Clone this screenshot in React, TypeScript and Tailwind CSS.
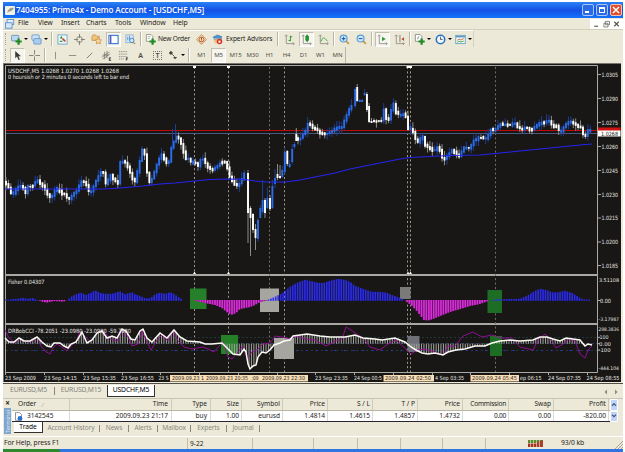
import React from "react";
import clsx from "clsx";

type Point = [number, number];

// key points of the price curve
const price: Point[] = [
  [5, 182], [8, 187], [12, 195], [16, 189], [20, 185], [24, 189], [26, 195], [28, 186], [32, 187], [35, 182],
  [37, 180], [40, 184], [44, 187], [47, 194], [51, 198], [55, 190], [58, 188], [61, 194], [65, 194], [68, 200],
  [72, 195], [76, 192], [80, 184], [83, 180], [87, 187], [90, 194], [93, 187], [96, 180], [100, 173], [103, 172],
  [106, 185], [110, 175], [114, 180], [118, 183], [120, 163], [124, 161], [128, 168], [132, 178], [135, 182],
  [138, 168], [142, 150], [145, 155], [147, 173], [150, 184], [154, 172], [158, 160], [162, 154], [165, 161],
  [168, 166], [171, 148], [174, 141], [176, 137], [179, 139], [182, 147], [185, 158], [188, 159], [192, 163],
  [195, 162], [198, 166], [201, 158], [204, 160], [207, 167], [213, 170], [217, 166], [221, 162], [226, 163],
  [229, 176], [232, 181], [236, 186], [240, 183], [243, 176], [246, 171],
];

const rally: Point[] = [
  [297, 138], [299, 141], [302, 135], [305, 133], [307, 123], [309, 124], [313, 128], [317, 130], [320, 133],
  [325, 134], [329, 133], [333, 130], [338, 127], [342, 127], [345, 118], [348, 112], [350, 107], [353, 106],
];

const tail: Point[] = [
  [373, 121], [377, 121], [381, 121], [383, 118], [384, 107], [386, 118], [389, 120], [391, 110], [393, 102],
  [396, 113], [400, 115], [403, 114], [406, 118], [408, 128], [411, 129], [414, 134], [416, 142], [419, 142],
  [422, 134], [424, 144], [428, 147], [432, 150], [436, 150], [438, 146], [441, 154], [443, 161], [446, 157],
  [449, 153], [452, 150], [456, 154], [459, 156], [462, 150], [465, 147], [468, 149], [471, 145], [474, 140],
  [477, 139], [480, 137], [484, 139], [487, 138], [490, 129], [492, 131], [496, 128], [500, 124], [505, 125],
  [510, 125], [514, 123], [518, 128], [522, 129], [526, 127], [530, 130], [534, 128], [538, 124], [543, 123],
  [548, 120], [551, 124], [553, 127], [556, 125], [559, 131], [562, 131], [565, 124], [569, 122], [573, 123],
  [577, 126], [581, 128], [584, 138], [587, 132], [589, 127], [591, 133],
];

// x, high, low, top, bottom, bullish
const crash: [number, number, number, number, number, number][] = [
  [248, 170, 243, 173, 213, 0],
  [250.5, 206, 256, 208, 218, 0],
  [253, 213, 233, 214, 230, 0],
  [255.5, 224, 250, 229, 238, 0],
  [258, 218, 242, 220, 239, 1],
  [260.3, 205, 218, 208, 218, 1],
  [262.6, 180, 214, 200, 212, 1],
  [265, 198, 218, 200, 213, 0],
  [267.4, 187, 209, 198, 208, 1],
  [270, 195, 211, 198, 209, 0],
  [272.4, 180, 209, 186, 208, 1],
  [275, 169, 188, 178, 184, 1],
  [277.5, 164, 180, 174, 178, 0],
  [280, 165, 179, 176, 178, 0],
  [282.3, 166, 178, 170, 177, 1],
  [284.8, 147, 174, 152, 172, 1],
  [287.3, 150, 166, 151, 164, 0],
  [289.7, 160, 168, 164, 167, 1],
  [292.2, 144, 164, 149, 162, 1],
  [294.4, 142, 149, 144, 147, 1],
  [296.3, 128, 141, 134, 141, 0],
  [355.2, 87, 108, 89, 106, 1],
  [357.2, 84, 102, 87, 101, 0],
  [359.8, 99, 102, 100, 102, 1],
  [362.2, 99, 102, 100, 102, 1],
  [364.6, 89, 96, 93, 95, 1],
  [366.9, 92, 112, 94, 110, 0],
  [369.1, 103, 123, 106, 122, 0],
  [371.5, 118, 123, 121, 123, 0],
];

const ma =
  "5,189 90,189 105,189 120,188 143,186 160,184 175,183 195,181 210,179.5 228,179 245,179.5 255,181 265,182 285,182 300,180 315,177 335,173 350,169 365,166 385,162 400,159 410,157.5 430,156.5 450,155.5 480,155 495,153.5 515,151.5 540,149 560,147 580,145 592,144";

const fisher: Point[] = [
  [5, 1.5], [9, 1], [14, 2], [18, 2], [22, 3], [28, 2], [32, 3], [37, 1], [39, 0.2], [41, -1.5], [47, -2.5],
  [54, -1], [62, -1.5], [66, -1], [68, 1], [71, 4], [77, 7], [81, 8], [86, 6], [90, 7.5], [95, 10.5], [100, 8],
  [104, 7], [108, 7], [112, 7], [120, 9.5], [125, 6.5], [132, 8.5], [136, 6], [140, 5], [144, 3], [148, 2],
  [152, 4], [156, 7], [160, 8], [165, 7], [170, 8.5], [174, 7], [178, 4], [182, 1.5], [184, 0], [193, 0],
  [196, -1], [205, -3], [215, -5], [222, -8], [228, -13], [231, -15], [236, -13], [240, -9], [245, -8],
  [250, -7], [255, -5], [260, -2], [266, -0.6], [268, 1], [275, 4], [283, 8], [290, 14], [297, 18], [305, 21],
  [310, 20], [318, 18], [324, 18], [330, 20], [338, 22], [345, 21], [350, 19], [355, 15], [360, 13],
  [366, 11], [372, 9], [380, 9], [387, 8], [394, 5], [400, 3], [404, 1], [407, -2], [411, -5], [416, -10],
  [420, -15], [424, -20], [428, -20.5], [433, -19], [440, -16], [450, -12], [460, -9], [470, -6], [480, -4],
  [488, -1], [492, 0.7], [497, 1.5], [520, 2], [527, 5], [535, 10], [540, 12], [546, 11], [552, 8.5],
  [558, 8.5], [565, 10], [572, 8], [578, 4], [583, 1.5], [590, 1],
];

const cci: Point[] = [
  [5, 338], [9, 342], [14, 342], [19, 338], [24, 341], [30, 341], [37, 337], [42, 342], [47, 346], [51, 347],
  [54, 343], [60, 343], [64, 346], [68, 348], [71, 344], [76, 342], [82, 332], [87, 343], [92, 340], [97, 333],
  [102, 331], [107, 338], [112, 336], [117, 338], [122, 329], [126, 331], [131, 339], [135, 340], [140, 331],
  [143, 329], [147, 338], [152, 342], [160, 333], [167, 338], [174, 330], [180, 337], [187, 341], [200, 342],
  [205, 344], [212, 344], [222, 343], [228, 349], [233, 354], [240, 355], [244, 349], [246, 352], [248, 364],
  [250, 369], [253, 366], [256, 365], [258, 357], [262, 352], [266, 353], [270, 350], [274, 345], [280, 343],
  [284, 341], [290, 340], [293, 336], [300, 335], [307, 334], [320, 336], [330, 337], [345, 337], [355, 335],
  [363, 338], [375, 339], [382, 340], [395, 338], [405, 342], [411, 347], [416, 350], [422, 353], [428, 354],
  [435, 353], [443, 355], [448, 352], [456, 350], [465, 349], [475, 346], [485, 346], [492, 343], [500, 341],
  [510, 340], [520, 341], [533, 340], [540, 337], [547, 337], [553, 339], [560, 341], [566, 338], [573, 339],
  [580, 340], [585, 346], [588, 344], [592, 345],
];

const turbo =
  "5,330 9,338 15,343 20,338 26,342 33,341 37,337 41,346 45,351 50,354 53,348 57,344 63,348 67,351 72,345 77,340 80,331 85,336 90,342 98,332 103,330 110,339 117,341 122,331 127,335 132,346 138,344 142,331 146,340 151,350 157,340 162,335 168,341 173,330 178,341 184,347 192,349 203,347 208,349 214,352 219,346 223,342 228,357 232,359 238,352 243,346 247,359 252,352 257,350 263,344 270,343 275,336 282,337 290,339 297,336 305,339 315,340 326,346 336,341 342,339 346,327 351,330 358,335 364,339 370,347 380,350 388,344 396,340 406,349 411,354 417,350 424,349 435,352 443,355 448,346 455,346 463,336 473,332 482,337 492,335 500,338 512,338 520,347 533,350 538,340 545,334 552,341 556,348 563,344 569,339 575,341 580,354 585,358 588,350 592,346";

const at = (pts: Point[], x: number) => {
  if (x <= pts[0][0]) return pts[0][1];
  for (let i = 1; i < pts.length; i++) {
    if (x <= pts[i][0]) {
      const [x0, y0] = pts[i - 1];
      const [x1, y1] = pts[i];
      return y0 + ((y1 - y0) * (x - x0)) / (x1 - x0);
    }
  }
  return pts[pts.length - 1][1];
};

const STEP = 2.43;

const steps = (from: number, to: number) => {
  const out: number[] = [];
  for (let x = from; x <= to; x += STEP) out.push(x);
  return out;
};

const noise = (x: number) => {
  const v = Math.sin(x * 12.9898) * 43758.5453;
  return v - Math.floor(v);
};

const Candle = ({ x, high, low, top, bottom, up }: { x: number; high: number; low: number; top: number; bottom: number; up: boolean }) => (
  <g>
    <rect x={x - 0.5} y={high} width={1} height={low - high} fill={up ? "#1c3f96" : "#8d8c88"} />
    <rect x={x - 0.95} y={top} width={1.9} height={bottom - top} fill={up ? "#2b6ce8" : "#ffffff"} />
  </g>
);

const Candles = ({ pts }: { pts: Point[] }) => (
  <>
    {steps(pts[0][0] + 1, pts[pts.length - 1][0] + 0.5).map((x) => {
      const open = at(pts, x - STEP);
      const close = at(pts, x);
      const n = noise(x);
      const up = Math.abs(close - open) < 1 ? n > 0.5 : close < open;
      const top = Math.min(open, close) - 0.4 - noise(x + 3) * 1.4;
      const bottom = Math.max(open, close) + 0.6 + noise(x + 5) * 1.4;
      return <Candle key={x} x={x} top={top} bottom={bottom} high={top - n * 6} low={bottom + noise(x + 7) * 5} up={up} />;
    })}
  </>
);

const Label = ({ x, y, w, children, fill = "#e8e7e2", size = 5.8 }: { x: number; y: number; w: number; children: string; fill?: string; size?: number }) => (
  <text x={x} y={y} textLength={w} lengthAdjust="spacingAndGlyphs" fontSize={size} fill={fill}>
    {children}
  </text>
);

const scale: [string, number][] = [
  ["1.0305", 74.5], ["1.0290", 98.5], ["1.0275", 122.5], ["1.0260", 146.5], ["1.0245", 170.5],
  ["1.0230", 194.5], ["1.0215", 218], ["1.0200", 242], ["1.0185", 265.5],
];

const times: [string, number, number][] = [
  ["23 Sep 2009", 5, 31], ["23 Sep 14:15", 44, 33], ["23 Sep 15:35", 83, 33], ["23 Sep 16:55", 121, 33],
  ["23 S", 158.5, 10], ["23 Sep 23:35", 315, 33], ["24 Sep 00:5", 354, 28], ["4 Sep 03:35", 435, 29],
  ["ep 06:15", 520, 21.5], ["24 Sep 07:35", 548, 33], ["24 Sep 08:55", 586.5, 33],
];

const Chart = () => (
  <svg viewBox="3 63 619 320" className="block h-[320px] w-[619px] shrink-0" fontFamily="'DejaVu Sans Condensed', 'DejaVu Sans', sans-serif">
    <rect x="3" y="63" width="619" height="320" fill="#181715" />
    <path d="M3 63.5H621M3.5 63V382" stroke="#77756d" fill="none" />
    <path d="M3 382.5H622M621.5 63V383" stroke="#efecdc" fill="none" />
    <path d="M5.5 372V65.5H597.5V372.5H5" stroke="#aaa9a4" fill="none" />
    <path d="M5 275H598M5 324H598" stroke="#a9a8a4" strokeWidth="2" />

    {[194.5, 228.5, 269.5, 284.5, 407.5, 410.5, 495.5].map((x) => (
      <path key={x} d={`M${x} 67V372`} stroke={x === 269.5 || x === 495.5 ? "#7d6c60" : "#a09b8f"} strokeDasharray="2 2.4" />
    ))}
    {[194.5, 228.5, 408, 410.5].map((x) => (
      <path key={x} d={`M${x - 1.5} 66h3v2h-3zM${x} 271.5l1.5 2.5h-3z`} fill="#fff" />
    ))}

    <path d="M6 133.5H597" stroke="#4b5a80" />
    <path d="M6 130.5H597" stroke="#c00808" />
    <Candles pts={price} />
    <Candles pts={rally} />
    <Candles pts={tail} />
    {crash.map(([x, high, low, top, bottom, up]) => (
      <Candle key={x} x={x} high={high} low={low} top={top} bottom={bottom} up={up === 1} />
    ))}
    <path d="M175.5 124V140M172.5 129V150" stroke="#1c3f96" />
    <polyline points={ma} fill="none" stroke="#2424ee" strokeWidth="1.1" />

    <Label x={8} y={72.6} w={111}>USDCHF,M5  1.0268 1.0270 1.0268 1.0268</Label>
    <Label x={8} y={79.4} w={121}>0 hoursish or 2 minutes 0 seconds left to bar end</Label>

    {/* Fisher */}
    <rect x="190" y="288.5" width="16.5" height="20.5" fill="#26802a" />
    <rect x="260" y="288.5" width="19" height="23.5" fill="#a6a5a0" />
    <rect x="400" y="287" width="10.5" height="12" fill="#7a7a78" />
    <rect x="487.5" y="290" width="14.5" height="23" fill="#1d6e24" />
    {steps(6, 590).map((x) => {
      const v = at(fisher, x);
      if (Math.abs(v) < 0.5) return null;
      return v > 0 ? (
        <rect key={x} x={x - 0.8} y={300.8 - v} width={1.6} height={v} fill="#2a2af4" />
      ) : (
        <g key={x}>
          <rect x={x - STEP / 2} y={300} width={STEP} height={-v} fill="#6f1470" />
          <rect x={x - 0.8} y={300} width={1.6} height={-v} fill="#d62fd6" />
        </g>
      );
    })}
    <Label x={8} y={284} w={36.5}>Fisher 0.04307</Label>

    {/* CCI */}
    <path d="M6 337.5H597" stroke="#1d3a38" strokeDasharray="2 2" />
    <path d="M6 343.5H597" stroke="#2f4565" strokeDasharray="3 2" strokeWidth="0.8" />
    <path d="M6 350.5H597" stroke="#1e3a48" strokeDasharray="2 3" />
    <path d="M15 350.5H597" stroke="#2b3ee8" strokeDasharray="1.4 8" />
    <rect x="221" y="335" width="17" height="19" fill="#26802a" />
    <rect x="274" y="338" width="20" height="21" fill="#a6a5a0" />
    <rect x="407.5" y="336" width="12" height="16" fill="#6f7077" />
    <rect x="490" y="336" width="12" height="20" fill="#1d6e24" />
    {steps(6, 592).map((x) => (
      <path key={x} d={`M${x} 343.7V${at(cci, x)}`} stroke="#a3a39e" />
    ))}
    <polyline points={turbo} fill="none" stroke="#9a0f9c" strokeWidth="0.9" />
    <polyline points={cci.map((p) => p.join(",")).join(" ")} fill="none" stroke="#fbfaf2" strokeWidth="1.5" />
    <Label x={8} y={333} w={123}>DRBobCCI -78.2051 -23.0980 -23.0980 -59.7980</Label>

    {/* price axis */}
    {scale.map(([t, y]) => (
      <g key={t}>
        <path d={`M598 ${y}h3`} stroke="#aaa9a4" />
        <Label x={601.5} y={y + 2.3} w={16.5}>{t}</Label>
      </g>
    ))}
    <rect x="598" y="127.5" width="22.5" height="4" fill="#d01212" />
    <rect x="598" y="130.5" width="22.5" height="6" fill="#fff" />
    <Label x={601} y={135.8} w={17} fill="#181715">1.0268</Label>
    <Label x={599} y={282} w={20} size={5.2}>3.51108</Label>
    <Label x={600} y={302.8} w={11}>0.00</Label>
    <Label x={598.5} y={321.3} w={20.5} size={4.9}>-3.17987</Label>
    <Label x={598.5} y={331} w={20.5} size={4.9}>298.3836</Label>
    <Label x={599.5} y={339} w={9} size={5.2}>100</Label>
    <Label x={599} y={345.5} w={12} size={5.2}>0.00</Label>
    <Label x={598.5} y={352.4} w={12} size={5.2}>-100</Label>
    <Label x={598.5} y={370} w={20.5} size={4.9}>-444.104</Label>
    <path d="M598 300.5h3M598 337.3h2M598 343.6h2M598 350h2" stroke="#aaa9a4" />

    {/* time axis */}
    <path d="M5.5 372v3M44.5 372v3M83.5 372v3M122.5 372v3M160.5 372v3M199.5 372v3M238.5 372v3M277.5 372v3M315.5 372v3M354.5 372v3M393.5 372v3M432.5 372v3M470.5 372v3M509.5 372v3M548.5 372v3M587.5 372v3" stroke="#aaa9a4" />
    {times.map(([t, x, w]) => (
      <Label key={t} x={x} y={380.2} w={w} size={5.6}>{t}</Label>
    ))}
    <path d="M170 375h138v6.5H170zM383.5 375h50.5v6.5h-50.5zM470.5 375h48.5v6.5h-48.5z" fill="#f8dfb8" />
    <Label x={172} y={380.2} w={32} size={5.4} fill="#1f1b17">2009.09.23 1</Label>
    <Label x={206} y={380.2} w={42} size={5.4} fill="#1f1b17">2009.09.23 20:35</Label>
    <Label x={251.5} y={380.2} w={7} size={5.4} fill="#1f1b17">:09</Label>
    <Label x={262} y={380.2} w={43} size={5.4} fill="#1f1b17">2009.09.23 22:30</Label>
    <Label x={385} y={380.2} w={46} size={5.4} fill="#1f1b17">2009.09.24 02:50</Label>
    <Label x={472} y={380.2} w={45} size={5.4} fill="#1f1b17">2009.09.24 05:45</Label>
  </svg>
);

const Tool = ({ children, wide, active, drop }: { children: React.ReactNode; wide?: string; active?: boolean; drop?: boolean }) => (
  <div className={clsx("flex h-[15px] shrink-0 items-center justify-center gap-px", wide ?? "w-[17px]")}>
    <div className={clsx("flex h-[15px] items-center justify-center", active ? "w-[15px] border border-[#c3bfae] border-r-white border-b-white bg-[#f6f5ee]" : "min-w-[13px]")}>
      {children}
    </div>
    {drop && <div className="h-0 w-0 border-x-2 border-t-2 border-x-transparent border-t-black" />}
  </div>
);

const Sep = ({ wide = "w-1" }: { wide?: string }) => (
  <div className={clsx("flex h-[14px] shrink-0 justify-center", wide)}>
    <div className="w-px bg-[#b9b5a3]" />
    <div className="w-px bg-white" />
  </div>
);

const Icon = ({ children, className = "h-[11px] w-[11px]" }: { children: React.ReactNode; className?: string }) => (
  <svg viewBox="0 0 12 12" className={clsx("shrink-0", className)} fill="none">
    {children}
  </svg>
);

const Plus = () => <path d="M8.3 4.8v6.8M4.9 8.2h6.8" stroke="#1d8a22" strokeWidth="2.4" />;

const Axes = () => <path d="M2.5 1v9.5H11M1 2.5L2.5 1 4 2.5M9.7 9l1.5 1.5L9.7 12" stroke="#8b8a82" strokeWidth="0.9" />;

const Lens = ({ plus }: { plus?: boolean }) => (
  <Icon>
    <path d="M7.5 7.5l3.3 3.3" stroke="#c99a3c" strokeWidth="2" />
    <circle cx="5" cy="5" r="3.8" fill="#cfe6fb" stroke="#5b9bd3" strokeWidth="1.2" />
    <path d={plus ? "M3 5h4M5 3v4" : "M3 5h4"} stroke="#2265a8" strokeWidth="1.2" />
  </Icon>
);

const MainTools = () => (
  <div className="flex h-[17px] w-[471px] items-center border-t border-r border-[#d6d2c0] border-t-white pl-0.5">
    <div className="mr-[3px] h-3 w-0.5 border-l border-dotted border-[#a5a190]" />
    <Tool wide="w-[19px]" drop>
      <Icon>
        <rect x="0.5" y="1.5" width="8" height="6" rx="1" fill="#b9d8f3" stroke="#6c93b0" />
        <Plus />
      </Icon>
    </Tool>
    <Tool wide="w-[21px]" drop>
      <Icon>
        <rect x="1" y="1" width="8" height="6" rx="1" fill="#cfe3f6" stroke="#6b9bc8" />
        <rect x="3" y="5" width="8" height="6" rx="1" fill="#a9cdf0" stroke="#6b9bc8" />
      </Icon>
    </Tool>
    <Sep wide="w-[5px]" />
    <Tool>
      <Icon>
        <rect x="1" y="1" width="10" height="10" fill="#eef7fb" stroke="#6fa9cd" />
        <path d="M3 5l2-3 1 3z" fill="#1d8a22" />
        <path d="M6 5l3 3" stroke="#c34b30" strokeWidth="2" />
        <path d="M3 8h3" stroke="#2a9a32" strokeWidth="1.3" />
      </Icon>
    </Tool>
    <Tool>
      <Icon>
        <circle cx="6" cy="6" r="3.2" stroke="#7e7d76" />
        <path d="M6 0v4.5M6 7.5V12M0 6h4.5M7.5 6H12" stroke="#7e7d76" />
      </Icon>
    </Tool>
    <Tool>
      <Icon>
        <path d="M1 3l1-2h3l1 1.5h3V7H1z" fill="#f0c478" stroke="#c98f48" strokeWidth="0.8" />
        <path d="M8 4l1.2 2.2 2.3.4-1.7 1.7.4 2.5L8 9.6l-2.2 1.2.4-2.5-1.7-1.7 2.3-.4z" fill="#f8d99a" stroke="#c98448" strokeWidth="0.8" />
      </Icon>
    </Tool>
    <Tool active>
      <Icon>
        <rect x="1" y="1.5" width="10" height="9" fill="#fff" stroke="#3579cf" strokeWidth="1.2" />
        <path d="M3 2v8" stroke="#3b3bb0" strokeWidth="1.3" />
      </Icon>
    </Tool>
    <Tool>
      <Icon>
        <rect x="1" y="1" width="8" height="8.5" fill="#e0edf7" stroke="#8eb4d3" />
        <path d="M3 3v4M5 2v5" stroke="#5a8ec0" />
        <path d="M9 9l2 2" stroke="#c99a3c" strokeWidth="1.6" />
        <circle cx="7.4" cy="7" r="2.4" fill="#cfe6fb" stroke="#3b83c7" />
      </Icon>
    </Tool>
    <Sep />
    <div className="flex w-[50px] shrink-0 items-center gap-[2px] pl-0.5">
      <Icon>
        <path d="M1.5.5h5l2 2V8h-7z" fill="#fff" stroke="#85846f" strokeWidth="0.8" />
        <path d="M3 3h3M3 5h2" stroke="#85846f" strokeWidth="0.7" />
        <Plus />
      </Icon>
      <span className="tracking-[-0.2px]">New Order</span>
    </div>
    <Tool>
      <Icon>
        <path d="M6 .5L11.5 6 6 11.5.5 6z" fill="#f0cda9" stroke="#cf9565" />
        <circle cx="6" cy="6" r="2.6" fill="#f6e2ca" stroke="#b5622c" />
        <path d="M6 4.2v2M6 7v.9" stroke="#97400f" strokeWidth="1.2" />
      </Icon>
    </Tool>
    <div className="flex w-[65px] shrink-0 items-center gap-[3px] pl-0.5">
      <Icon>
        <path d="M1 3.5L6 1l5 2-4 3z" fill="#4a93cf" stroke="#2d6ea8" strokeWidth="0.6" />
        <path d="M2 5h6v4L4 10.5 2 8z" fill="#efc283" />
        <path d="M1.5 4.5L7 6l4-2.5V6H2z" fill="#5ea2d8" />
        <circle cx="8.2" cy="8.3" r="3" fill="#d6321d" />
        <rect x="7" y="7.2" width="2.3" height="2.3" fill="#fff" />
      </Icon>
      <span className="tracking-[-0.12px]">Expert Advisors</span>
    </div>
    <Sep wide="w-[6px]" />
    <Tool>
      <Icon>
        <Axes />
        <path d="M7 2v6M7 3h2M5 7h2" stroke="#2f9a34" strokeWidth="1.1" />
      </Icon>
    </Tool>
    <Tool active>
      <Icon>
        <Axes />
        <path d="M6.7 0.5v8.5" stroke="#1a7d20" />
        <rect x="5.2" y="2" width="3" height="5.3" rx="0.8" fill="#22a22a" stroke="#13701a" strokeWidth="0.7" />
      </Icon>
    </Tool>
    <Tool>
      <Icon>
        <Axes />
        <path d="M3.5 8c1.5-5 3-5 7 0" stroke="#3aa83f" />
      </Icon>
    </Tool>
    <Sep />
    <Tool><Lens plus /></Tool>
    <Tool><Lens /></Tool>
    <Sep />
    <Tool active>
      <Icon>
        <Axes />
        <path d="M5.5 3l4 2.5-4 2.5z" fill="#2a9a32" />
      </Icon>
    </Tool>
    <Tool>
      <Icon>
        <Axes />
        <path d="M6.5 1v8" stroke="#77766f" />
        <path d="M11 3.5L8 5.5l3 2z" fill="#c34b30" />
      </Icon>
    </Tool>
    <Sep />
    <Tool wide="w-[20px]" drop>
      <Icon>
        <path d="M1.5.5h5l2 2V8h-7z" fill="#fff" stroke="#77766f" strokeWidth="0.8" />
        <path d="M3.5 5.5c1 0 1-3 2.2-3" stroke="#555" strokeWidth="0.8" />
        <Plus />
      </Icon>
    </Tool>
    <Tool wide="w-[21px]" drop>
      <Icon>
        <circle cx="6" cy="6" r="4.6" fill="#f2f8fe" stroke="#2a72c4" strokeWidth="1.7" />
        <path d="M6 3v3h2.3" stroke="#444" strokeWidth="0.9" />
      </Icon>
    </Tool>
    <Tool wide="w-[20px]" drop>
      <Icon>
        <rect x="0.8" y="1.5" width="10.4" height="9" fill="#f3f8f6" stroke="#6ba3c6" />
        <path d="M1 3h10" stroke="#4b8fbc" strokeWidth="1.4" />
        <path d="M2.5 7l2-1.5 2 1 3-1.5" stroke="#c0562a" strokeWidth="0.9" />
        <path d="M2.5 9l2-1 2 .7 3-1" stroke="#2f9a34" strokeWidth="0.9" />
      </Icon>
    </Tool>
  </div>
);

const LineTools = () => (
  <div className="flex h-4 w-[343px] items-center border-r border-[#b9b5a3] pl-0.5 text-[6px] text-[#4c4b45]">
    <div className="mr-[3px] h-3 w-0.5 border-l border-dotted border-[#a5a190]" />
    <Tool active>
      <Icon>
        <path d="M3.5 1v8l2-1.8L7 11l1.6-.7L7 6.8h2.8z" fill="#3c3b38" />
      </Icon>
    </Tool>
    <Tool>
      <Icon><path d="M6 0v5M6 7v5M0 6h5M7 6h5" stroke="#7e7d76" /></Icon>
    </Tool>
    <Sep />
    <Tool><Icon><path d="M6 2v8" stroke="#8b8a82" /></Icon></Tool>
    <Tool><Icon><path d="M2 6h8" stroke="#8b8a82" /></Icon></Tool>
    <Tool><Icon><path d="M3 9l6-6" stroke="#77766f" /></Icon></Tool>
    <Tool>
      <Icon>
        <path d="M1 8l8-6M2 10l8-6M4 2v8M6.5 1v8M1.5 5.5h7" stroke="#66655f" strokeWidth="0.7" />
        <path d="M11 8.5H9v3h2M9 10h1.6" stroke="#222" strokeWidth="0.8" />
      </Icon>
    </Tool>
    <Tool>
      <Icon>
        <path d="M1 1.8h9M1 4.5h9M1 7.2h9M1 9.8h6" stroke="#8b8a82" strokeDasharray="1.3 0.7" />
        <path d="M11 8.5H9v3M9 10h1.6" stroke="#222" strokeWidth="0.8" />
      </Icon>
    </Tool>
    <Tool><span className="text-[7px] font-semibold">A</span></Tool>
    <Tool>
      <span className="flex h-[9px] w-[9px] items-center justify-center border border-dotted border-[#77766f] text-[7px] font-semibold">T</span>
    </Tool>
    <Tool wide="w-[19px]" drop>
      <Icon className="h-[10px] w-[10px]">
        <path d="M1 3.5L3.5 1 6 3.5 3.5 6zM6 8.5h5L8.5 11z" fill="#45443f" />
        <path d="M5 5l3 3" stroke="#45443f" />
      </Icon>
    </Tool>
    <Sep wide="w-[8px]" />
    {["M1", "M5", "M15", "M30", "H1", "H4", "D1", "W1", "MN"].map((p) => (
      <Tool key={p} active={p === "M5"}>
        <span className="tracking-[-0.1px]">{p}</span>
      </Tool>
    ))}
  </div>
);

const columns = [
  { head: "Order", cell: "3142545", cls: "w-[58px] px-0.5" },
  { head: "Time", cell: "2009.09.23 21:17", cls: "w-[102px] justify-end pr-[3px]" },
  { head: "Type", cell: "buy", cls: "w-[39px] justify-end pr-[3px]" },
  { head: "Size", cell: "1.00", cls: "w-[31px] justify-end pr-0.5" },
  { head: "Symbol", cell: "eurusd", cls: "w-[41px] justify-end pr-0.5" },
  { head: "Price", cell: "1.4814", cls: "w-[45px] justify-end pr-0.5" },
  { head: "S / L", cell: "1.4615", cls: "w-[45px] justify-end pr-0.5" },
  { head: "T / P", cell: "1.4857", cls: "w-[45px] justify-end pr-0.5" },
  { head: "Price", cell: "1.4732", cls: "w-[45px] justify-end pr-0.5" },
  { head: "Commission", cell: "0.00", cls: "w-[46px] justify-end pr-0.5 tracking-[-0.25px]" },
  { head: "Swap", cell: "0.00", cls: "w-[45px] justify-end pr-0.5" },
  { head: "Profit", cell: "-820.00", cls: "w-[55px] justify-end pr-0.5" },
];

const Terminal = () => (
  <div className="flex h-[36px] border-t border-[#c9c5b3]">
    <div className="flex w-[9px] flex-col items-center">
      <span className="h-2 text-[8px] leading-[7px] font-bold">×</span>
      <div className="mt-px flex h-[26px] w-[7px] items-center justify-center bg-[#7fa5cf]">
        <span className="rotate-180 text-[6px] leading-none tracking-[-0.2px] text-[#dbe8f6] [writing-mode:vertical-rl]">Terminal</span>
      </div>
    </div>
    <div className="flex-1">
      <div className="flex">
        <div className="w-[598px]">
          <div className="flex h-3 border-b border-[#bab6a5]">
            {columns.map((c, i) => (
              <div key={i} className={clsx("flex shrink-0 items-center border-r border-[#cfcbb9]", c.cls)}>
                <span className={clsx(i === 0 && "pl-1")}>{c.head}</span>
                {i === 0 && <span className="pl-1.5 text-[6px] text-[#9b9888]">⁄</span>}
              </div>
            ))}
          </div>
          <div className="flex h-[11px] border-b border-[#26262e] bg-white">
            {columns.map((c, i) => (
              <div key={i} className={clsx("flex shrink-0 items-center border-r border-[#dddbd0]", c.cls)}>
                {i === 0 && (
                  <Icon className="mr-1 h-[9px] w-[9px]">
                    <path d="M2 .5h5l3 3V11H2z" fill="#fff" stroke="#68717d" />
                    <circle cx="8" cy="8.5" r="3.2" fill="#2770ce" />
                  </Icon>
                )}
                <span>{c.cell}</span>
              </div>
            ))}
          </div>
        </div>
        <div className="flex w-[8px] flex-col">
          {["M3 7l3-3 3 3", "M3 4l3 3 3-3"].map((d) => (
            <div key={d} className="flex h-[11.5px] items-center justify-center rounded-[1px] border border-white bg-[#c3d4f6]">
              <Icon className="h-2 w-2"><path d={d} stroke="#42608e" strokeWidth="2" /></Icon>
            </div>
          ))}
        </div>
      </div>
      <div className="flex h-3 items-center text-[#8b897d]">
        <div className="ml-0.5 flex h-[11px] w-[29px] items-center justify-center self-start border-r border-b border-[#33322e] bg-white text-black">Trade</div>
        {[["Account History", "w-[57px]"], ["News", "w-[29px]"], ["Alerts", "w-[29px]"], ["Mailbox", "w-[33px]"], ["Experts", "w-[36px]"], ["Journal", "w-[33px]"]].map(([t, w]) => (
          <div key={t} className={clsx("flex h-[7px] items-center justify-center border-r border-[#8b897d] tracking-[-0.12px]", w)}>{t}</div>
        ))}
      </div>
    </div>
  </div>
);

const StatusBar = () => (
  <div className="mt-0.5 flex h-[13px] items-center border-t border-white pl-px">
    <div className="w-[183px] text-[6.8px] tracking-[-0.1px]">For Help, press F1</div>
    <div className="h-[11px] w-[65px] border-l border-[#c2beac] pl-0.5 leading-[11px]">9-22</div>
    <div className="h-[11px] w-[61px] border-l border-[#c2beac]" />
    <div className="h-[11px] w-[44px] border-l border-[#c2beac]" />
    <div className="h-[11px] w-[43px] border-l border-[#c2beac]" />
    <div className="h-[11px] w-[42px] border-l border-[#c2beac]" />
    <div className="h-[11px] w-[43px] border-l border-[#c2beac]" />
    <div className="flex h-[11px] w-[76px] items-center border-l border-[#c2beac] pl-[42px]">
      <svg viewBox="0 0 15 7" className="h-[7px] w-[15px]">
        <path d="M0 0h15v3H0z" fill="#5c8a2d" />
        <path d="M0 3.5h15V7H0z" fill="#a53322" />
        <path d="M9 2l6-2v7H9z" fill="#a8402b" />
        <path d="M2.5 0v7M5.5 0v7M8.5 0v7M11.5 0v7" stroke="#ecead9" strokeWidth="0.6" />
      </svg>
    </div>
    <div className="flex-1 text-[6.8px] tracking-[-0.1px]">93/0 kb</div>
    <svg viewBox="0 0 8 8" className="h-2 w-2 self-end" stroke="#a8a491">
      <path d="M0 8l8-8M3 8l5-5M6 8l2-2" />
    </svg>
  </div>
);

const App = () => {
  return (
    <div className="h-[452px] w-[625px] overflow-hidden bg-white pt-0.5 pl-[3px] font-['Noto_Sans',sans-serif] text-[6.6px] leading-none text-[#1f1e1b]">
      <div className="flex h-[450px] w-[620px] flex-col bg-[#ece9d8] whitespace-nowrap">
        <div className="flex h-4 shrink-0 items-center bg-linear-to-b from-[#2b83f5] via-[#1450e4] to-[#1473fa] pl-0.5 text-white">
          <svg viewBox="0 0 10 9" className="h-[9px] w-[10px]">
            <rect width="10" height="9" rx="1" fill="#f2f1e6" />
            <path d="M2 6.5C4 2 6 1.5 9 2L7 4.5z" fill="#9c9a84" />
          </svg>
          <span className="ml-px flex-1 font-['Open_Sans'] text-[8.2px] font-semibold tracking-[-0.12px]">7404955: Prime4x - Demo Account - [USDCHF,M5]</span>
          <div className="mr-px flex gap-0.5">
            <div className="flex h-3 w-3 items-end rounded-[2px] border border-[#a9c6f8] bg-[#2b6be6] p-0.5"><div className="h-0.5 w-1 bg-white" /></div>
            <div className="h-3 w-3 rounded-[2px] border border-[#a9c6f8] bg-[#2b6be6] p-0.5"><div className="h-full border border-t-2 border-white" /></div>
            <div className="flex h-3 w-3 items-center justify-center rounded-[2px] border border-[#f3c0b2] bg-[#dc5030]">
              <Icon className="h-2 w-2"><path d="M1.5 1.5l9 9M10.5 1.5l-9 9" stroke="#fff" strokeWidth="2.2" /></Icon>
            </div>
          </div>
        </div>

        <div className="flex h-3 shrink-0 items-center border-b border-[#d3cfbd] pl-0.5 text-[6.9px] tracking-[-0.1px]">
          <Icon className="h-[10px] w-[10px]">
            <rect x="2.5" y="0.5" width="8" height="6" fill="#e4effb" stroke="#508bc5" />
            <rect x="0.5" y="4.5" width="8" height="6.5" fill="#d6e7fa" stroke="#508bc5" />
          </Icon>
          {[["File", "w-[20px]"], ["View", "w-[23px]"], ["Insert", "w-[25px]"], ["Charts", "w-[29px]"], ["Tools", "w-[25px]"], ["Window", "w-[33px]"], ["Help", "w-[24px]"]].map(([t, w], i) => (
            <span key={t} className={clsx(w, i === 0 && "ml-[3px]")}>{t}</span>
          ))}
          <div className="ml-auto flex h-[10px] gap-px bg-white px-0.5">
            <Icon className="h-[10px] w-[9px]"><path d="M3 9h5" stroke="#55544d" strokeWidth="1.5" /></Icon>
            <Icon className="h-[10px] w-[9px]"><path d="M4.5 2.5H10V7H4.5zM2.5 5H8v5H2.5z" stroke="#66655d" /></Icon>
            <Icon className="h-[10px] w-[9px]"><path d="M3 3l6 6M9 3L3 9" stroke="#55544d" strokeWidth="1.5" /></Icon>
          </div>
        </div>

        <div className="h-[33px] shrink-0">
          <MainTools />
          <LineTools />
        </div>

        <Chart />

        <div className="flex h-[15px] shrink-0 items-start border-t border-[#514f48] pt-px text-[6.8px] tracking-[-0.15px] text-[#85837a]">
          <div className="flex h-[11px] w-[51px] items-center justify-center">EURUSD,M5</div>
          <div className="flex h-2 w-[53px] items-center justify-center border-l border-[#85837a] mt-[1.5px]">EURUSD,M15</div>
          <div className="flex h-3 w-[48px] items-center justify-center border border-t-0 border-[#33322e] bg-white text-black">USDCHF,M5</div>
          <div className="ml-auto flex w-5 justify-between pt-1 pr-1">
            <Icon className="h-[6px] w-[6px]"><path d="M8 1L3 6l5 5z" fill="#8d8a7b" /></Icon>
            <Icon className="h-[6px] w-[6px]"><path d="M4 1l5 5-5 5z" fill="#8d8a7b" /></Icon>
          </div>
        </div>

        <Terminal />
        <StatusBar />
        <div className="flex flex-1 bg-[#2f74e0]">
          <div className="w-[57px] rounded-tr-sm bg-[#2f8a2f]" />
        </div>
      </div>
    </div>
  );
};

export default App;
